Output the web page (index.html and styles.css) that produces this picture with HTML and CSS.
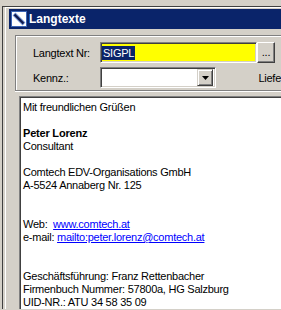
FILE: index.html
```html
<!DOCTYPE html>
<html lang="de">
<head>
    <meta charset="UTF-8">
    <title>Langtexte</title>
    <link rel="stylesheet" href="styles.css">
</head>
<body>

    <div class="desk">
        <div class="mdi">
            <div class="win">
                <!-- Titelleiste -->
                <div class="titlebar">
                    <svg class="ico" width="16" height="16" viewBox="0 0 16 16">
                        <rect x="0.5" y="0.5" width="15" height="15" fill="#fff" stroke="#3b64b4"/>
                        <line x1="3" y1="3" x2="13" y2="13" stroke="#6d8fd0" stroke-width="4"/>
                        <line x1="3.5" y1="3.5" x2="12.5" y2="12.5" stroke="#10184a" stroke-width="2.2"/>
                    </svg>
                    <span class="title">Langtexte</span>
                </div>

                <div class="content">
                    <!-- Kopf -->
                    <div class="head">
                        <div class="row">
                            <span class="lbl">Langtext Nr:</span>
                            <div class="edit yellow"><span class="sel">SIGPL</span></div>
                            <div class="btn dots">...</div>
                        </div>
                        <div class="row">
                            <span class="lbl">Kennz.:</span>
                            <div class="edit combo">
                                <div class="combo-btn">
                                    <svg width="7" height="4" viewBox="0 0 7 4"><path d="M0 0h7L3.5 4z" fill="#000"/></svg>
                                </div>
                            </div>
                            <span class="lbl2">Liefe</span>
                        </div>
                    </div>

                    <!-- Text -->
                    <div class="memo">
                        <div>Mit freundlichen Grüßen</div>
                        <div>&nbsp;</div>
                        <div class="b">Peter Lorenz</div>
                        <div>Consultant</div>
                        <div>&nbsp;</div>
                        <div>Comtech EDV-Organisations GmbH</div>
                        <div>A-5524 Annaberg Nr. 125</div>
                        <div>&nbsp;</div>
                        <div>&nbsp;</div>
                        <div class="pre">Web:  <a href="#">www.comtech.at</a></div>
                        <div class="pre">e-mail: <a href="#">mailto:peter.lorenz@comtech.at</a></div>
                        <div>&nbsp;</div>
                        <div>&nbsp;</div>
                        <div>Geschäftsführung: Franz Rettenbacher</div>
                        <div>Firmenbuch Nummer: 57800a, HG Salzburg</div>
                        <div>UID-NR.: ATU 34 58 35 09</div>
                    </div>
                </div>
            </div>
        </div>
    </div>

</body>
</html>
```

FILE: styles.css
```css
html, body {
    margin: 0;
    padding: 0;
    height: 100%;
    overflow: hidden;
}

body {
    background: #d4d0c8;
    font-family: "Liberation Sans", Arial, sans-serif;
    font-size: 11px;
    letter-spacing: -0.25px;
    color: #000;
}

.desk {
    padding: 6px 0 0 2px;
}
.mdi {
    height: 302px;
    border-top: 1px solid #404040;
    border-left: 1px solid #404040;
    padding-left: 2px;
    overflow: hidden;
}
.win {
    height: 100%;
    box-sizing: border-box;
    border-top: 1px solid #fff;
    border-left: 1px solid #fff;
    padding: 1px 0 0 3px;
}

/* Titelleiste */
.titlebar {
    height: 20px;
    background: #0a246a;
    display: flex;
    align-items: center;
    gap: 2px;
    padding-left: 2px;
}
.ico {
    display: block;
}
.title {
    color: #fff;
    font-weight: bold;
    font-size: 12px;
    letter-spacing: 0;
}

.content {
    padding: 6px 0 0 6px;
}

/* Kopf */
.head {
    border: 1px solid #808080;
    border-right: 0;
    box-shadow: inset 1px 1px 0 #fff, 0 1px 0 #fff;
    padding: 6px 0 2px 17px;
    display: flex;
    flex-direction: column;
    gap: 4px;
}
.row {
    display: flex;
    align-items: center;
    height: 21px;
}
.lbl {
    width: 67px;
}
.lbl2 {
    margin-left: 42px;
}

.edit {
    box-sizing: border-box;
    height: 21px;
    border: 1px solid;
    border-color: #808080 #fff #fff #808080;
    box-shadow: inset 1px 1px 0 #404040, inset -1px -1px 0 #d4d0c8;
    display: flex;
    align-items: center;
    padding: 2px;
}
.yellow {
    width: 157px;
    background: #ffff00;
    padding-left: 1px;
}
.sel {
    background: #0a246a;
    color: #fff;
    line-height: 14px;
    padding: 0 1px;
}

.btn {
    box-sizing: border-box;
    border: 1px solid;
    border-color: #fff #404040 #404040 #fff;
    box-shadow: inset -1px -1px 0 #808080;
    background: #d4d0c8;
    display: flex;
    align-items: center;
    justify-content: center;
}
.dots {
    width: 18px;
    height: 21px;
    padding-bottom: 2px;
}

.combo {
    width: 117px;
    background: #fff;
    justify-content: flex-end;
}
.combo-btn {
    box-sizing: border-box;
    width: 16px;
    height: 17px;
    border: 1px solid;
    border-color: #d4d0c8 #404040 #404040 #d4d0c8;
    box-shadow: inset 1px 1px 0 #fff, inset -1px -1px 0 #808080;
    background: #d4d0c8;
    display: flex;
    align-items: center;
    justify-content: center;
}
.combo-btn svg {
    display: block;
}

/* Text */
.memo {
    margin: 5px 0 0 4px;
    height: 220px;
    background: #fff;
    border: 1px solid;
    border-color: #808080 #fff #fff #808080;
    border-right: 0;
    box-shadow: inset 1px 1px 0 #404040;
    padding: 4px 2px 0 3px;
    line-height: 13px;
}
.b {
    font-weight: bold;
    letter-spacing: -0.2px;
}
.pre {
    white-space: pre;
}
.memo a {
    color: #0000ff;
}
```
